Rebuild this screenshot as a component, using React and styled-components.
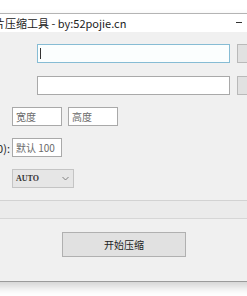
import React from 'react';
import styled, { createGlobalStyle } from 'styled-components';

const GlobalStyle = createGlobalStyle`
  html, body {
    margin: 0;
    padding: 0;
    background: #ffffff;
    overflow: hidden;
  }
  body {
    font-family: "Noto Sans CJK SC", "Liberation Sans", sans-serif;
  }
`;

const Page = styled.div`
  width: 247px;
  height: 296px;
  overflow: hidden;
  padding-top: 13px;
  box-sizing: border-box;
`;

const Window = styled.div`
  margin-left: -80px;
  width: 420px;
  border-top: 1px solid #b4b4b4;
  border-bottom: 1px solid #9a9a9a;
  box-shadow: 0 5px 9px rgba(0, 0, 0, 0.18);
  background: #f0f0f0;
`;

const TitleBar = styled.div`
  height: 18px;
  background: #ffffff;
  display: flex;
  align-items: center;
  position: relative;
`;

const Title = styled.span`
  margin-left: 63px;
  font-size: 11px;
  color: #222;
  white-space: nowrap;
  line-height: 18px;
`;

const Minimize = styled.span`
  position: absolute;
  left: 316px;
  top: 8px;
  width: 6px;
  height: 1px;
  background: #333;
`;

const Body = styled.div`
  padding: 12px 0 24px;
  display: flex;
  flex-direction: column;
`;

const Row = styled.div`
  display: flex;
  align-items: center;
  height: 19px;
  margin-top: ${p => p.mt || 0}px;
  padding-left: ${p => p.pl || 0}px;
`;

const Label = styled.div`
  width: ${p => p.w}px;
  flex-shrink: 0;
  text-align: right;
  font-size: 11px;
  color: #222;
  white-space: nowrap;
  margin-right: ${p => p.gap}px;
`;

const TextBox = styled.div`
  width: ${p => p.w}px;
  height: 19px;
  box-sizing: border-box;
  border: 1px solid ${p => (p.focused ? '#86bcd4' : '#a9a9a9')};
  background: ${p => (p.focused ? '#fbfefe' : '#ffffff')};
  display: flex;
  align-items: center;
  padding-left: 3px;
  font-size: 10px;
  color: #6a6a6a;
  flex-shrink: 0;
  margin-right: ${p => p.mr || 0}px;
`;

const Caret = styled.span`
  width: 1px;
  height: 11px;
  background: #333;
  margin-left: -1px;
`;

const SideButton = styled.div`
  width: 40px;
  height: 19px;
  box-sizing: border-box;
  border: 1px solid #b9b9b9;
  background: #e1e1e1;
  margin-left: 7px;
  flex-shrink: 0;
`;

const Select = styled.div`
  width: 62px;
  height: 19px;
  box-sizing: border-box;
  border: 1px solid #c4c4c4;
  background: #e6e6e6;
  display: flex;
  align-items: center;
  justify-content: space-between;
  padding: 0 4px 0 3px;
  font-size: 8px;
  font-weight: bold;
  font-family: "Liberation Serif", serif;
  color: #333;
`;

const Divider = styled.div`
  margin-top: 12px;
  height: 19px;
  box-sizing: border-box;
  border-top: 1px solid #d2d2d2;
  border-bottom: 1px solid #d6d6d6;
  background: #ebebeb;
`;

const ActionRow = styled.div`
  display: flex;
  padding-left: 142px;
  margin-top: 13px;
`;

const ActionButton = styled.div`
  width: 124px;
  height: 25px;
  box-sizing: border-box;
  border: 1px solid #b0b0b0;
  background: #e1e1e1;
  display: flex;
  align-items: center;
  justify-content: center;
  font-size: 10px;
  color: #222;
`;

const Chevron = () => (
  <svg width="7" height="5" viewBox="0 0 7 5">
    <path d="M0.5 1 L3.5 4 L6.5 1" fill="none" stroke="#777" strokeWidth="0.9" />
  </svg>
);

export default function App() {
  return (
    <Page>
      <GlobalStyle />
      <Window>
        <TitleBar>
          <Title>图片压缩工具 - by:52pojie.cn</Title>
          <Minimize />
        </TitleBar>
        <Body>
          <Row pl={117}>
            <TextBox w={193} focused>
              <Caret />
            </TextBox>
            <SideButton />
          </Row>
          <Row mt={13} pl={117}>
            <TextBox w={193} />
            <SideButton />
          </Row>
          <Row mt={12} pl={92}>
            <TextBox w={50} mr={6}>宽度</TextBox>
            <TextBox w={50}>高度</TextBox>
          </Row>
          <Row mt={12}>
            <Label w={90} gap={2}>压缩质量(1-100):</Label>
            <TextBox w={50}>默认 100</TextBox>
          </Row>
          <Row mt={12} pl={92}>
            <Select>
              AUTO
              <Chevron />
            </Select>
          </Row>
          <Divider />
          <ActionRow>
            <ActionButton>开始压缩</ActionButton>
          </ActionRow>
        </Body>
      </Window>
    </Page>
  );
}
